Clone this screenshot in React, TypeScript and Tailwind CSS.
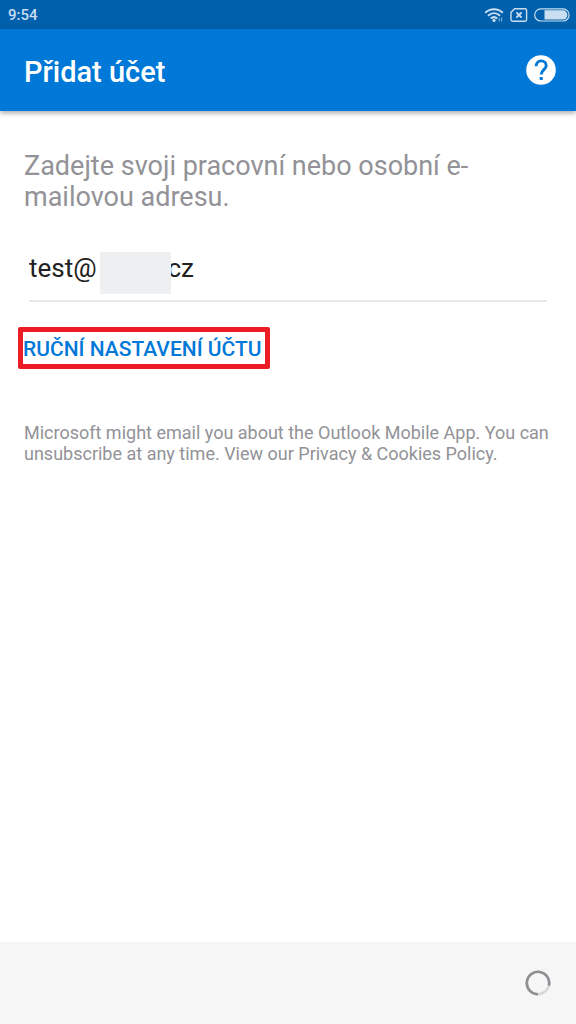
import { useState } from 'react';

function WifiIcon() {
  return (
    <svg width="20" height="16" viewBox="0 0 20 16" fill="none" stroke="currentColor" strokeWidth="2">
      <path d="M1.2 5.8C6.2 1 13.8 1 18.8 5.8" />
      <path d="M4 8.8c3.6-3.3 8.4-3.3 12 0" />
      <path d="M6.8 11.6c2-1.8 4.4-1.8 6.4 0" />
      <circle cx="10" cy="13.4" r="1.6" fill="currentColor" stroke="none" />
      <path d="M15.2 11v3.6M17.6 10.6v4" strokeWidth="1.2" opacity=".6" />
    </svg>
  );
}

function NoSimIcon() {
  return (
    <svg width="18" height="14" viewBox="0 0 18 14" fill="none" stroke="currentColor" strokeWidth="1.4">
      <path d="M4.6.8H15a1.6 1.6 0 0 1 1.6 1.6v9.2a1.6 1.6 0 0 1-1.6 1.6H2.6A1.6 1.6 0 0 1 1 11.6V4.4z" />
      <path d="M6.4 4.4l5.2 5.2M11.6 4.4L6.4 9.6" strokeWidth="2" />
    </svg>
  );
}

function BatteryIcon() {
  return (
    <svg width="36" height="14" viewBox="0 0 36 14" fill="none">
      <rect x=".7" y=".8" width="34.4" height="12.2" rx="6.1" stroke="currentColor" strokeWidth="1.2" />
      <path d="M10.5 2.3h18.3a4.6 4.6 0 0 1 0 9.2H10.5z" fill="currentColor" />
    </svg>
  );
}

function HelpIcon() {
  return (
    <svg width="30" height="30" viewBox="0 0 30 30">
      <circle cx="15" cy="15" r="14.8" fill="#fff" />
      <path
        d="M10.2 11.2c0-3.1 2-5.3 5-5.3s5 2 5 4.8c0 3.9-5 4.1-5 8.9"
        fill="none"
        stroke="#0078d7"
        strokeWidth="2.9"
      />
      <path d="M13.7 22h3v3h-3z" fill="#0078d7" />
    </svg>
  );
}

function Spinner() {
  return (
    <svg width="26" height="26" viewBox="0 0 26 26" fill="none" strokeWidth="2.6" role="status" aria-label="Načítání">
      <circle cx="13" cy="13" r="11.2" stroke="#d8d8da" />
      <path d="M13 24.2A11.2 11.2 0 1 1 23.9 15.6" stroke="#8e8e93" />
    </svg>
  );
}

export default function App() {
  // the hidden domain is kept as a blank stretch under the grey cover
  const [email, setEmail] = useState('test@' + '\u00a0'.repeat(11) + 'cz');

  return (
    <div className="flex min-h-screen flex-col bg-white font-['Roboto',sans-serif]">
      <div className="flex h-[29px] items-center justify-between bg-[#0060ac] pl-2 pr-[6px] text-[#c9def0]">
        <span className="text-[15px] font-medium leading-5">9:54</span>
        <div className="flex items-center gap-[6px]">
          <WifiIcon />
          <NoSimIcon />
          <BatteryIcon />
        </div>
      </div>

      <header className="flex h-[82px] items-center justify-between bg-[#0078d7] pl-6 pr-5 shadow-[0_2px_5px_rgba(0,0,0,0.35)]">
        <h1 className="pt-1 text-[29px] font-medium leading-8 text-white">Přidat účet</h1>
        <button type="button" aria-label="Nápověda">
          <HelpIcon />
        </button>
      </header>

      <main className="flex-1 px-6 pt-10">
        <label htmlFor="email" className="block text-[27px] leading-[31px] text-[#929297]">
          Zadejte svoji pracovní nebo osobní e-mailovou adresu.
        </label>

        <div className="relative ml-[5px] mr-[5px] mt-8">
          <input
            id="email"
            type="text"
            inputMode="email"
            value={email}
            onChange={(e) => setEmail(e.target.value)}
            className="h-[57px] w-full border-b-2 border-[#e8e8ea] pb-[10px] text-[26px] leading-8 text-[#212121] outline-none"
          />
          <span className="absolute left-[71px] top-[7px] h-[42px] w-[71px] bg-[#edeff0]" />
        </div>

        <button
          type="button"
          className="-ml-[6px] mt-[25px] block h-[42px] rounded-xs border-5 border-[#ee1c25] pr-[3px] pt-[2px] text-[21px] font-medium leading-7 text-[#0078d7]"
        >
          RUČNÍ NASTAVENÍ ÚČTU
        </button>

        <p className="mt-[53px] text-[18px] leading-[21px] text-[#929297]">
          Microsoft might email you about the Outlook Mobile App. You can unsubscribe at any time. View our Privacy &amp; Cookies Policy.
        </p>
      </main>

      <footer className="flex h-[82px] items-center justify-end bg-[#f6f6f6] pr-[25px]">
        <Spinner />
      </footer>
    </div>
  );
}
